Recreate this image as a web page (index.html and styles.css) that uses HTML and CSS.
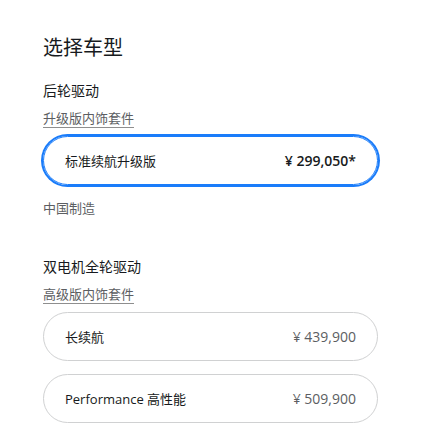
FILE: index.html
```html
<!DOCTYPE html>
<html>
<head>
  <title>选择车型</title>
  <link rel="stylesheet" href="styles.css">
</head>
<body>
  <div class="container">
    <h2>选择车型</h2>

    <div class="group">
      <div class="group-title">后轮驱动</div>
      <a class="trim-link" href="#">升级版内饰套件</a>
      <div class="options">
        <div class="option selected">
          <span class="name">标准续航升级版</span>
          <span class="price">¥ 299,050*</span>
        </div>
      </div>
      <div class="note">中国制造</div>
    </div>

    <div class="group">
      <div class="group-title">双电机全轮驱动</div>
      <a class="trim-link" href="#">高级版内饰套件</a>
      <div class="options">
        <div class="option">
          <span class="name">长续航</span>
          <span class="price">¥ 439,900</span>
        </div>
        <div class="option">
          <span class="name">Performance 高性能</span>
          <span class="price">¥ 509,900</span>
        </div>
      </div>
    </div>
  </div>
</body>
</html>
```

FILE: styles.css
```css
body {
  font-family: "Open Sans", "Noto Sans CJK SC", sans-serif;
  background-color: #fff;
  color: #171a20;
  margin: 0;
  padding: 0;
}

.container {
  width: 335px;
  padding: 33px 0 0 43px;
}

h2 {
  font-family: "Noto Sans CJK SC", sans-serif;
  font-size: 20px;
  font-weight: 400;
  line-height: 28px;
  margin: 0 0 19px;
}

.group {
  margin-bottom: 39px;
}

.group:last-child {
  margin-bottom: 0;
}

.group-title {
  font-family: "Noto Sans CJK SC", sans-serif;
  font-size: 14px;
  line-height: 20px;
  margin-bottom: 6px;
}

.trim-link {
  display: inline-block;
  font-family: "Noto Sans CJK SC", sans-serif;
  font-size: 13px;
  line-height: 18px;
  color: #5c5e62;
  text-decoration: none;
  border-bottom: 1px solid #8e8e8e;
}

.options {
  display: flex;
  flex-direction: column;
  gap: 13px;
  margin-top: 8px;
}

.option {
  display: flex;
  justify-content: space-between;
  align-items: center;
  height: 47px;
  padding: 0 21px;
  border: 1px solid #d0d1d2;
  border-radius: 25px;
  font-size: 14px;
}

.option.selected {
  border-color: #1a7cfa;
  box-shadow: 0 0 0 2px #1a7cfa;
}

.name {
  font-size: 13px;
}

.price {
  color: #5c5e62;
}

.selected .price {
  color: #171a20;
  font-weight: 600;
}

.note {
  font-family: "Noto Sans CJK SC", sans-serif;
  font-size: 13px;
  line-height: 18px;
  color: #5c5e62;
  margin-top: 14px;
}
```
